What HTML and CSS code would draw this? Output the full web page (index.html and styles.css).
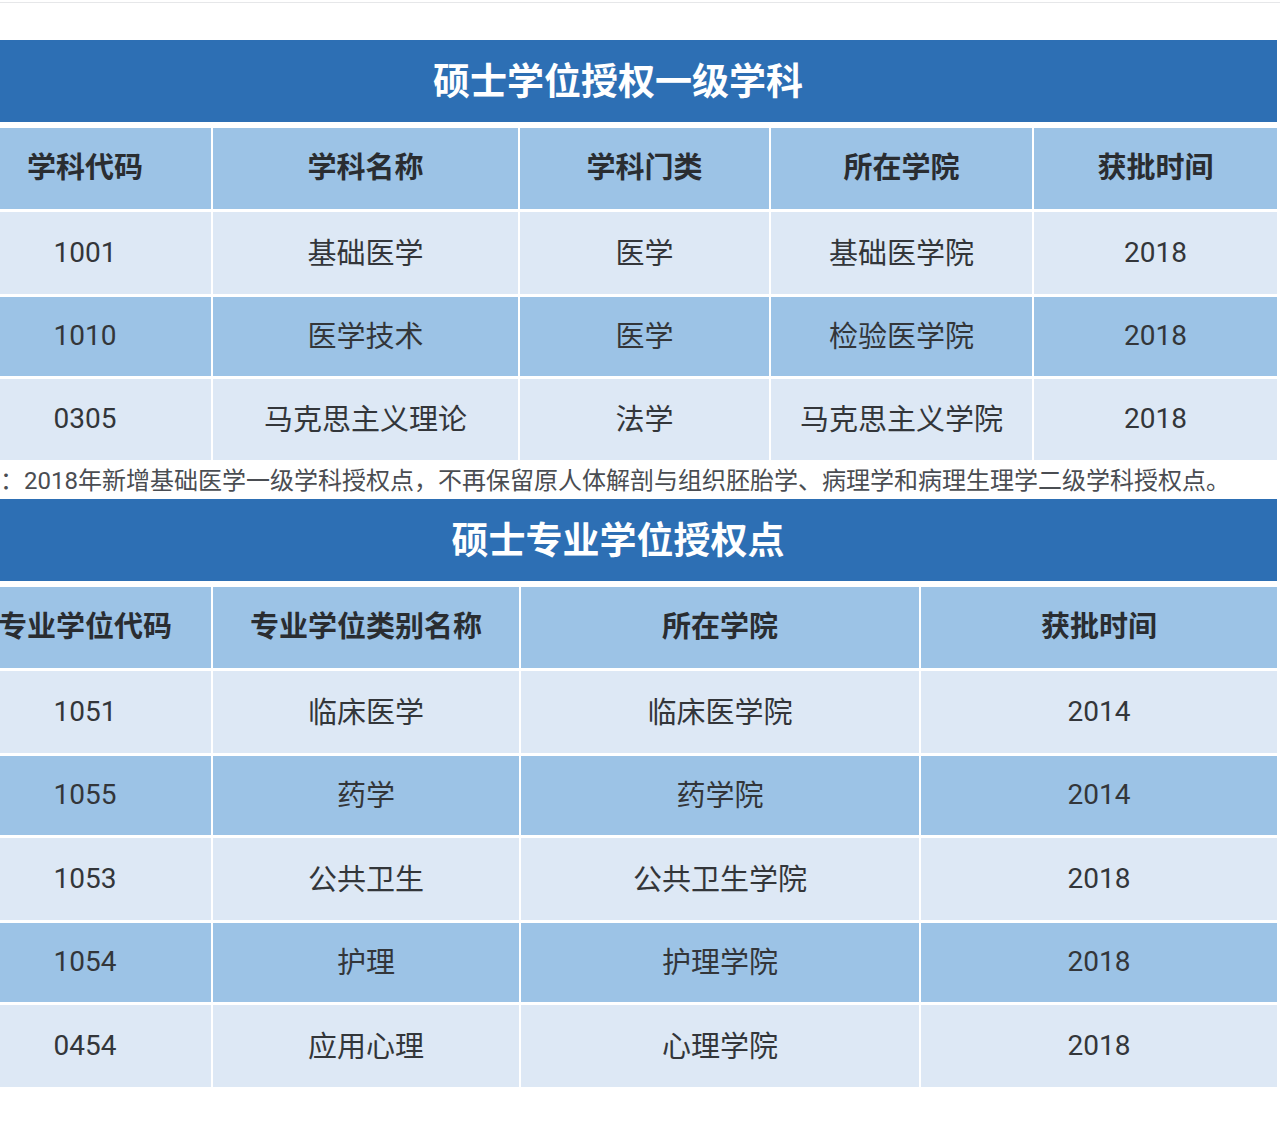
FILE: index.html
```html
<!DOCTYPE html>
<html lang="zh-CN">
<head>
<meta charset="utf-8">
<title>硕士学位授权</title>
<link rel="stylesheet" href="styles.css">
</head>
<body>
<div class="topline"></div>
<div class="sheet">
  <div class="title">硕士学位授权一级学科</div>
  <div class="grid grid-a">
    <div class="cell head">学科代码</div>
    <div class="cell head">学科名称</div>
    <div class="cell head">学科门类</div>
    <div class="cell head">所在学院</div>
    <div class="cell head">获批时间</div>

    <div class="cell light num">1001</div>
    <div class="cell light">基础医学</div>
    <div class="cell light">医学</div>
    <div class="cell light">基础医学院</div>
    <div class="cell light num">2018</div>

    <div class="cell dark num">1010</div>
    <div class="cell dark">医学技术</div>
    <div class="cell dark">医学</div>
    <div class="cell dark">检验医学院</div>
    <div class="cell dark num">2018</div>

    <div class="cell light num">0305</div>
    <div class="cell light">马克思主义理论</div>
    <div class="cell light">法学</div>
    <div class="cell light">马克思主义学院</div>
    <div class="cell light num">2018</div>
  </div>
  <div class="note">注：2018年新增基础医学一级学科授权点，不再保留原人体解剖与组织胚胎学、病理学和病理生理学二级学科授权点。</div>
  <div class="title">硕士专业学位授权点</div>
  <div class="grid grid-b">
    <div class="cell head">专业学位代码</div>
    <div class="cell head">专业学位类别名称</div>
    <div class="cell head">所在学院</div>
    <div class="cell head">获批时间</div>

    <div class="cell light num">1051</div>
    <div class="cell light">临床医学</div>
    <div class="cell light">临床医学院</div>
    <div class="cell light num">2014</div>

    <div class="cell dark num">1055</div>
    <div class="cell dark">药学</div>
    <div class="cell dark">药学院</div>
    <div class="cell dark num">2014</div>

    <div class="cell light num">1053</div>
    <div class="cell light">公共卫生</div>
    <div class="cell light">公共卫生学院</div>
    <div class="cell light num">2018</div>

    <div class="cell dark num">1054</div>
    <div class="cell dark">护理</div>
    <div class="cell dark">护理学院</div>
    <div class="cell dark num">2018</div>

    <div class="cell light num">0454</div>
    <div class="cell light">应用心理</div>
    <div class="cell light">心理学院</div>
    <div class="cell light num">2018</div>
  </div>
</div>
</body>
</html>
```

FILE: styles.css
```css
html, body {
  margin: 0;
  padding: 0;
  background: #ffffff;
}

body {
  width: 1280px;
  height: 1136px;
  overflow: hidden;
  font-family: Roboto, "Noto Sans CJK SC", sans-serif;
  color: #33363a;
}

.topline {
  height: 2px;
  border-bottom: 1px solid #e6e7e9;
}

.sheet {
  width: 1318px;
  margin-left: -41px;
  margin-top: 37px;
}

.title {
  height: 82px;
  box-sizing: border-box;
  padding-bottom: 4px;
  background: #2d6fb4;
  color: #ffffff;
  font-family: "Noto Sans CJK SC", sans-serif;
  font-weight: 700;
  font-size: 37px;
  display: flex;
  align-items: center;
  justify-content: center;
  margin-bottom: 6px;
}

.grid {
  display: grid;
  column-gap: 2px;
  row-gap: 3px;
  grid-template-rows: 81px 82px 79px 82px 79px 82px;
}

.grid-a {
  grid-template-columns: 252px 305px 249px 261px 243px;
  grid-template-rows: 81px 82px 79px 81px;
}

.grid-b {
  grid-template-columns: 252px 306px 398px 356px;
}

.cell {
  display: flex;
  align-items: center;
  justify-content: center;
  box-sizing: border-box;
  padding-bottom: 5px;
  font-size: 29px;
  white-space: nowrap;
}

.num {
  font-size: 28px;
  padding-bottom: 2px;
}

.head {
  background: #9cc3e6;
  font-family: "Noto Sans CJK SC", sans-serif;
  font-weight: 700;
  font-size: 29px;
  color: #2a2d31;
  padding-bottom: 7px;
}

.light {
  background: #dde8f5;
}

.dark {
  background: #9cc3e6;
}

.note {
  height: 39px;
  box-sizing: border-box;
  padding-bottom: 2px;
  display: flex;
  align-items: center;
  padding-left: 17px;
  font-size: 24px;
  color: #4a4d52;
  white-space: nowrap;
}
```
